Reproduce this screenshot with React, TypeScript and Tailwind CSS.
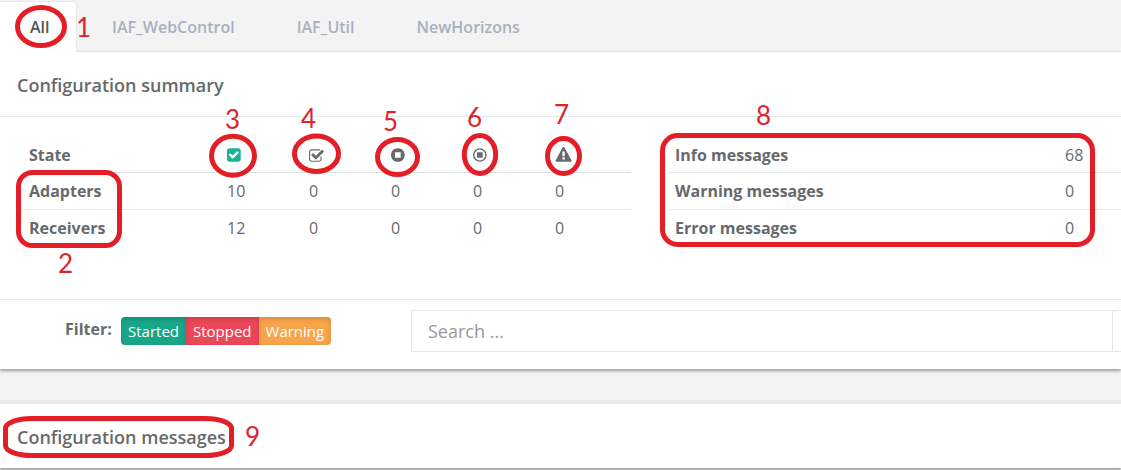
import React from "react";

const icons = {
  checkSquare:
    "M813 1299l614-614q19-19 19-45t-19-45l-102-102q-19-19-45-19t-45 19l-467 467-211-211q-19-19-45-19t-45 19l-102 102q-19 19-19 45t19 45l358 358q19 19 45 19t45-19zm851-883v960q0 119-84.5 203.5t-203.5 84.5h-960q-119 0-203.5-84.5t-84.5-203.5v-960q0-119 84.5-203.5t203.5-84.5h960q119 0 203.5 84.5t84.5 203.5z",
  checkSquareOutline:
    "M1472 930v318q0 119-84.5 203.5t-203.5 84.5h-832q-119 0-203.5-84.5t-84.5-203.5v-832q0-119 84.5-203.5t203.5-84.5h832q63 0 117 25 15 7 18 23 3 17-9 29l-49 49q-10 10-23 10-3 0-9-2-23-6-45-6h-832q-66 0-113 47t-47 113v832q0 66 47 113t113 47h832q66 0 113-47t47-113v-254q0-13 9-22l64-64q10-10 23-10 6 0 12 3 20 8 20 29zm231-489l-814 814q-24 24-57 24t-57-24l-430-430q-24-24-24-57t24-57l110-110q24-24 57-24t57 24l263 263 647-647q24-24 57-24t57 24l110 110q24 24 24 57t-24 57z",
  stopCircle:
    "M1216 1184v-576q0-14-9-23t-23-9h-576q-14 0-23 9t-9 23v576q0 14 9 23t23 9h576q14 0 23-9t9-23zm448-288q0 209-103 385.5t-279.5 279.5-385.5 103-385.5-103-279.5-279.5-103-385.5 103-385.5 279.5-279.5 385.5-103 385.5 103 279.5 279.5 103 385.5z",
  stopCircleOutline:
    "M896 128a768 768 0 1 1 0 1536a768 768 0 1 1 0-1536zM896 288a608 608 0 1 0 0 1216a608 608 0 1 0 0-1216zM608 576h576q32 0 32 32v576q0 32-32 32h-576q-32 0-32-32v-576q0-32 32-32z",
  warning:
    "M1024 1375v-190q0-14-9.5-23.5t-22.5-9.5h-192q-13 0-22.5 9.5t-9.5 23.5v190q0 14 9.5 23.5t22.5 9.5h192q13 0 22.5-9.5t9.5-23.5zm-2-374l18-459q0-12-10-19-13-11-24-11h-220q-11 0-24 11-10 7-10 21l17 457q0 10 10 16.5t24 6.5h185q14 0 23.5-6.5t10.5-16.5zm-14-934l768 1408q35 63-2 126-17 29-46.5 46t-63.5 17h-1536q-34 0-63.5-17t-46.5-46q-37-63-2-126l768-1408q17-31 47-49t65-18 65 18 47 49z",
};

const states = [
  { label: "Started", path: icons.checkSquare, box: "128 0 1792 1792", color: "text-[#1ab394]" },
  { label: "Partially started", path: icons.checkSquareOutline, box: "64 -128 1792 1792", color: "" },
  { label: "Stopped", path: icons.stopCircle, box: "128 0 1792 1792", color: "" },
  { label: "Stopping", path: icons.stopCircleOutline, box: "128 0 1792 1792", color: "" },
  { label: "Error", path: icons.warning, box: "-64 0 1792 1792", color: "" },
];

const summary = [
  { name: "Adapters", counts: [10, 0, 0, 0, 0] },
  { name: "Receivers", counts: [12, 0, 0, 0, 0] },
];

const messages = [
  { name: "Info messages", count: 68 },
  { name: "Warning messages", count: 0 },
  { name: "Error messages", count: 0 },
];

const filters = [
  { name: "Started", style: "bg-[#18a689] rounded-l-[4px]" },
  { name: "Stopped", style: "bg-[#ec4758]" },
  { name: "Warning", style: "bg-[#f7a54a] rounded-r-[4px]" },
];

const ellipses = [
  [41, 26.5, 23.5, 19],
  [233, 155.7, 21.5, 19.5],
  [316.5, 153.8, 22, 17.7],
  [397.5, 157, 20, 17.5],
  [480, 154.5, 15.7, 19],
  [563.5, 156, 16, 17.5],
];

const boxes = [
  [18.5, 172.5, 101, 73, 14, 14],
  [662.5, 135.5, 430, 109, 15, 15],
  [5.5, 418.5, 226, 37, 26, 10],
];

const digits = [
  [76, 37],
  [58, 273],
  [225, 129],
  [301, 128],
  [383, 131],
  [467, 127],
  [554, 124],
  [756, 125],
  [245, 446],
];

function Annotations() {
  return (
    <svg
      className="pointer-events-none absolute top-0 left-0"
      width="1121"
      height="470"
      viewBox="0 0 1121 470"
    >
      <g fill="none" stroke="#e41e26" strokeWidth="5">
        {ellipses.map(([cx, cy, rx, ry]) => (
          <ellipse key={cx} cx={cx} cy={cy} rx={rx} ry={ry} />
        ))}
        {boxes.map(([x, y, width, height, rx, ry]) => (
          <rect key={x} x={x} y={y} width={width} height={height} rx={rx} ry={ry} />
        ))}
      </g>
      <g className="fill-[#d8262c] font-['Lato',sans-serif] text-[26px]">
        {digits.map(([x, y], i) => (
          <text key={i} x={x} y={y}>
            {i + 1}
          </text>
        ))}
      </g>
    </svg>
  );
}

export default function App() {
  return (
    <div className="relative overflow-hidden bg-[#f3f3f4] pb-[2px] font-['Open_Sans',sans-serif] text-[16px] leading-6 text-[#676a6c]">
      <nav className="flex h-[52px] border-b border-[#e7eaec] font-semibold text-[#a7b1c2]">
        <a
          href="#all"
          className="mt-px h-[51px] w-[77px] rounded-tr-[5px] border-t border-r border-[#e7eaec] bg-white pt-[13px] pl-[30px] text-[#555555]"
        >
          All
        </a>
        <a href="#webcontrol" className="pt-[15px] pl-[35px]">IAF_WebControl</a>
        <a href="#util" className="pt-[15px] pl-[62px]">IAF_Util</a>
        <a href="#newhorizons" className="pt-[15px] pl-[62px]">NewHorizons</a>
      </nav>

      <main>
        <section className="bg-white shadow-[0_2px_3px_rgba(0,0,0,0.35)]">
          <h2 className="border-b border-[#e7eaec] pt-[21px] pb-[19px] pl-[17px] text-[18px] font-semibold">
            Configuration summary
          </h2>

          <div className="grid grid-cols-[608fr_452fr] items-start gap-[38px] pt-[19px] pb-[53px] pl-[23px]">
            <table className="w-full table-fixed text-left">
              <thead>
                <tr className="h-9 border-b border-[#dddddd]">
                  <th className="pt-[2px] pl-[6px] font-bold">State</th>
                  {states.map((s) => (
                    <th key={s.label} className="w-[82px] pt-[2px] pl-[6px]">
                      <svg
                        role="img"
                        aria-label={s.label}
                        viewBox={s.box}
                        className={s.color}
                        width="16"
                        height="16"
                        fill="currentColor"
                        fillRule="evenodd"
                        overflow="visible"
                      >
                        <path d={s.path} />
                      </svg>
                    </th>
                  ))}
                </tr>
              </thead>
              <tbody>
                {summary.map((row) => (
                  <tr key={row.name} className="h-[37px] border-b border-[#e7eaec] last:border-0">
                    <th className="pl-[6px] font-bold">{row.name}</th>
                    {row.counts.map((count, i) => (
                      <td key={i} className="pl-[6px]">{count}</td>
                    ))}
                  </tr>
                ))}
              </tbody>
            </table>

            <table className="w-full table-fixed text-left">
              <tbody>
                {messages.map((m) => (
                  <tr key={m.name} className="group h-[37px] border-b border-[#e7eaec] first:h-9 last:border-0">
                    <th className="pl-[6px] font-bold group-first:pt-[2px]">{m.name}</th>
                    <td className="w-[62px] pl-[6px] group-first:pt-[2px]">{m.count}</td>
                  </tr>
                ))}
              </tbody>
            </table>
          </div>

          <div className="flex items-start border-t border-[#e7eaec] pt-[10px] pb-[17px] pl-[65px]">
            <span className="w-[56px] pt-[7px] font-bold">Filter:</span>
            <div className="flex w-[290px] pt-[7px]">
              {filters.map((f) => (
                <button
                  key={f.name}
                  type="button"
                  className={`h-7 px-[7px] text-[15px] leading-7 text-white shadow-[inset_0_2px_5px_rgba(0,0,0,0.15)] ${f.style}`}
                >
                  {f.name}
                </button>
              ))}
            </div>
            <input
              type="text"
              aria-label="Search"
              placeholder="Search ..."
              className="h-[42px] min-w-0 flex-1 rounded-l-[2px] border border-[#e5e6e7] bg-white px-4 text-[18px] placeholder:text-[#999999]"
            />
            <span className="h-[42px] w-2 border-y border-[#e5e6e7]" />
          </div>
        </section>

        <section className="mt-[31px] border-t-4 border-[#e7eaec] bg-white shadow-[0_2px_2px_rgba(0,0,0,0.35)]">
          <h2 className="pt-[21px] pb-[19px] pl-[17px] text-[18px] font-semibold">
            Configuration messages
          </h2>
        </section>
      </main>

      <Annotations />
    </div>
  );
}
